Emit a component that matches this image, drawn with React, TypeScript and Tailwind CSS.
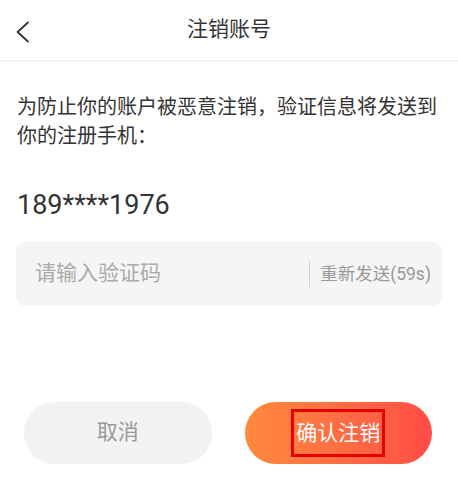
export default function App() {
  return (
    <div
      className="w-[458px] h-[499px] bg-white text-[#333]"
      style={{ fontFamily: "Roboto, 'Noto Sans CJK SC', sans-serif" }}
    >
      {/* header */}
      <div className="relative flex h-[62px] items-center justify-center border-b-2 border-[#f4f4f4]">
        <button className="absolute left-[11px] top-[16px] p-1" aria-label="返回">
          <svg width="16" height="24" viewBox="0 0 16 24" fill="none">
            <path d="M13 2.5 L2.5 12 L13 21.5" stroke="#333" strokeWidth="1.8" strokeLinecap="round" strokeLinejoin="round" />
          </svg>
        </button>
        <h1 className="text-[21px] font-normal">注销账号</h1>
      </div>

      <div className="px-[17px]">
        <p className="mt-[31px] text-[20px] leading-[29px]">
          为防止你的账户被恶意注销，验证信息将发送到你的注册手机：
        </p>
        <p className="mt-[36px] text-[27px] leading-[36px]">189****1976</p>

        <div className="mt-[19px] -mx-px flex h-[64px] items-center rounded-[9px] bg-[#f5f5f5] pl-[19px] pr-[11px]">
          <input
            className="min-w-0 flex-1 bg-transparent text-[21px] outline-none placeholder:text-[#aaa]"
            placeholder="请输入验证码"
          />
          <span className="h-[26px] w-px bg-[#d0d0d0]" />
          <span className="ml-[10px] text-[17.5px] text-[#999]">重新发送(59s)</span>
        </div>
      </div>

      <div className="mt-[96px] flex gap-[33px] pl-[24px] pr-[26px]">
        <button className="flex h-[62px] flex-1 items-center justify-center rounded-full bg-[#f2f2f2] text-[21px] text-[#999]">
          取消
        </button>
        <button className="flex h-[62px] flex-1 items-center justify-center rounded-full bg-gradient-to-r from-[#ff8a3c] to-[#ff4b46] text-[21px] text-white">
          <span className="border-[3px] border-[#e60000] px-[2px] leading-[42px]">确认注销</span>
        </button>
      </div>
    </div>
  );
}
